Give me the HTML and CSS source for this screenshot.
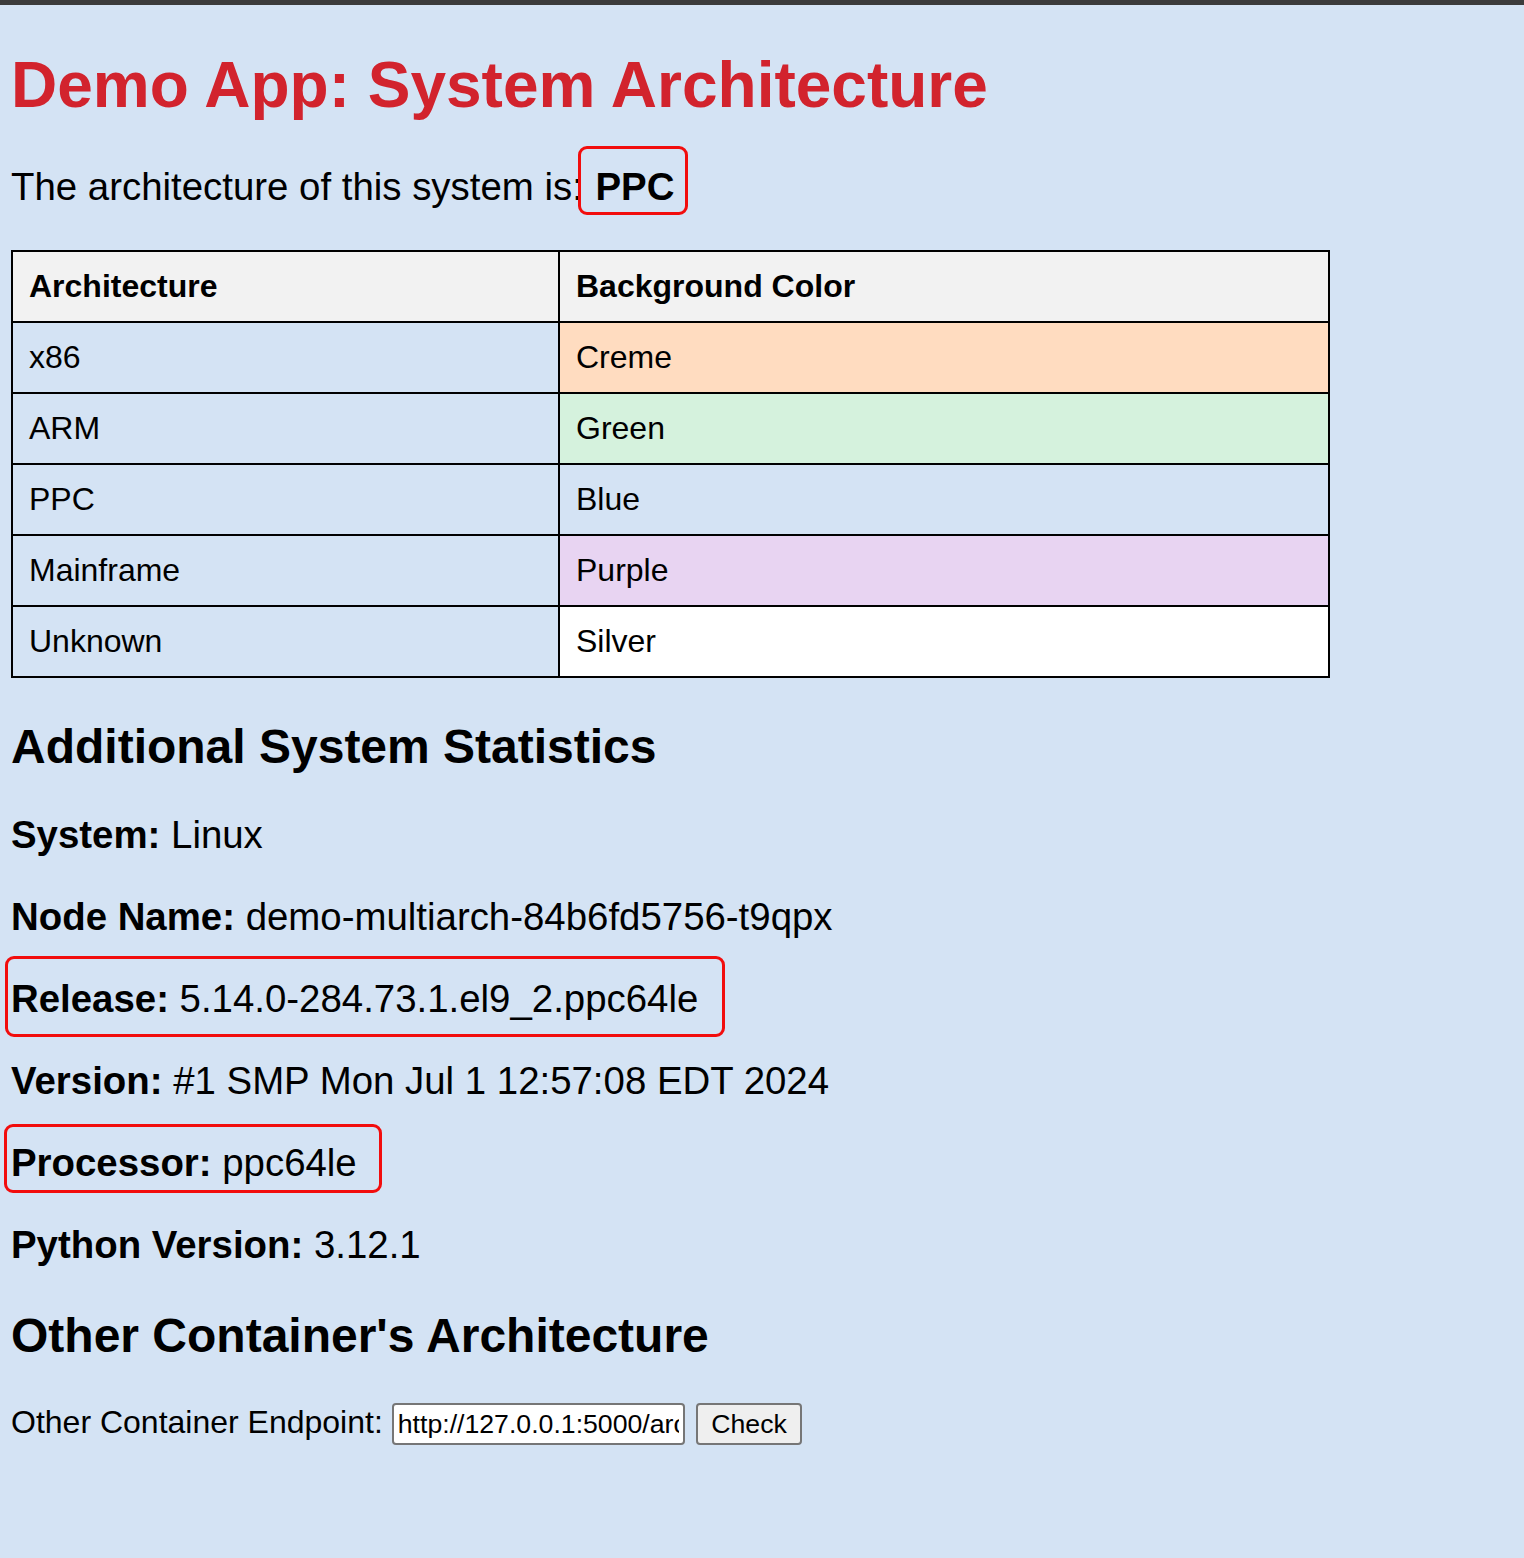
FILE: index.html
```html
<!DOCTYPE html>
<html lang="en">
<head>
<meta charset="utf-8">
<title>Demo App: System Architecture</title>
<link rel="stylesheet" href="styles.css">
</head>
<body>
<div class="topbar"></div>
<main class="page">
  <h1 class="title">Demo App: System Architecture</h1>
  <p class="intro">The architecture of this system is: <span class="hl hl-arch"><strong>PPC</strong></span></p>

  <table class="arch-table">
    <colgroup>
      <col class="col-arch">
      <col class="col-color">
    </colgroup>
    <thead>
      <tr><th>Architecture</th><th class="head-color">Background Color</th></tr>
    </thead>
    <tbody>
      <tr><td>x86</td><td class="c-creme">Creme</td></tr>
      <tr><td>ARM</td><td class="c-green">Green</td></tr>
      <tr><td>PPC</td><td class="c-blue">Blue</td></tr>
      <tr><td>Mainframe</td><td class="c-purple">Purple</td></tr>
      <tr><td>Unknown</td><td class="c-silver">Silver</td></tr>
    </tbody>
  </table>

  <h2 class="section">Additional System Statistics</h2>
  <p class="stat"><strong>System:</strong> Linux</p>
  <p class="stat"><strong>Node Name:</strong> demo-multiarch-84b6fd5756-t9qpx</p>
  <p class="stat"><span class="hl hl-release"><strong>Release:</strong> 5.14.0-284.73.1.el9_2.ppc64le</span></p>
  <p class="stat"><strong>Version:</strong> #1 SMP Mon Jul 1 12:57:08 EDT 2024</p>
  <p class="stat"><span class="hl hl-proc"><strong>Processor:</strong> ppc64le</span></p>
  <p class="stat"><strong>Python Version:</strong> 3.12.1</p>

  <h2 class="section">Other Container's Architecture</h2>
  <form class="endpoint" onsubmit="return false;">
    <label class="endpoint-label" for="endpoint">Other Container Endpoint:</label>
    <input class="endpoint-input" id="endpoint" type="text" value="http://127.0.0.1:5000/arch">
    <button class="endpoint-btn" type="button">Check</button>
  </form>
</main>
</body>
</html>
```

FILE: styles.css
```css
html, body {
  margin: 0;
  padding: 0;
}

body {
  background: #d4e3f4;
  color: #000;
  font-family: "Liberation Sans", Arial, sans-serif;
  font-size: 38.4px;
  min-height: 1558px;
}

.topbar {
  height: 5px;
  background: #3b3b3b;
}

.page {
  padding: 0 11px;
}

.title {
  font-size: 64px;
  font-weight: bold;
  color: #d2232d;
  margin: 43px 0 43px;
  line-height: normal;
}

.intro {
  margin: 0 0 41px;
}

.hl {
  position: relative;
}

.hl::after {
  content: "";
  position: absolute;
  border: 3px solid #f20d0d;
  border-radius: 9px;
  pointer-events: none;
}

.hl-arch {
  padding-left: 2px;
}

.hl-arch::after {
  left: -15px;
  right: -14px;
  top: -19px;
  bottom: -7px;
}

.hl-release::after {
  left: -6px;
  right: -27px;
  top: -21px;
  bottom: -17px;
}

.hl-proc::after {
  left: -7px;
  right: -25px;
  top: -17px;
  bottom: -9px;
}

.arch-table {
  border-collapse: collapse;
  table-layout: fixed;
  width: 1319px;
  font-size: 32px;
  margin: 0 0 1px;
}

.col-arch {
  width: 547px;
}

.arch-table th,
.arch-table td {
  border: 2px solid #000;
  padding: 16px;
  text-align: left;
  line-height: normal;
}

.arch-table th {
  background: #f2f2f2;
  font-weight: bold;
}

.c-creme { background: #ffdcc0; }
.c-green { background: #d5f2dd; }
.c-blue { background: #d4e3f4; }
.c-purple { background: #e8d4f2; }
.c-silver { background: #ffffff; }

.section {
  font-size: 48px;
  font-weight: bold;
  margin: 41px 0 39px;
  line-height: normal;
}

.stat {
  margin: 38px 0;
}

.endpoint {
  display: flex;
  align-items: baseline;
  gap: 9px;
  margin: 40px 0 0;
}

.endpoint-label {
  font-size: 32px;
}

.endpoint-input {
  box-sizing: border-box;
  width: 293px;
  height: 42px;
  font-family: "Liberation Sans", Arial, sans-serif;
  font-size: 26.67px;
  padding: 2px 4px;
  border: 2px solid #767676;
  border-radius: 4px;
  background: #fff;
  color: #000;
  margin: 0;
}

.endpoint-btn {
  box-sizing: border-box;
  height: 42px;
  font-family: "Liberation Sans", Arial, sans-serif;
  font-size: 26.67px;
  padding: 2px 13.5px;
  border: 2px solid #767676;
  border-radius: 4px;
  background: #efefef;
  color: #000;
  margin: 0 0 0 2px;
}
```
